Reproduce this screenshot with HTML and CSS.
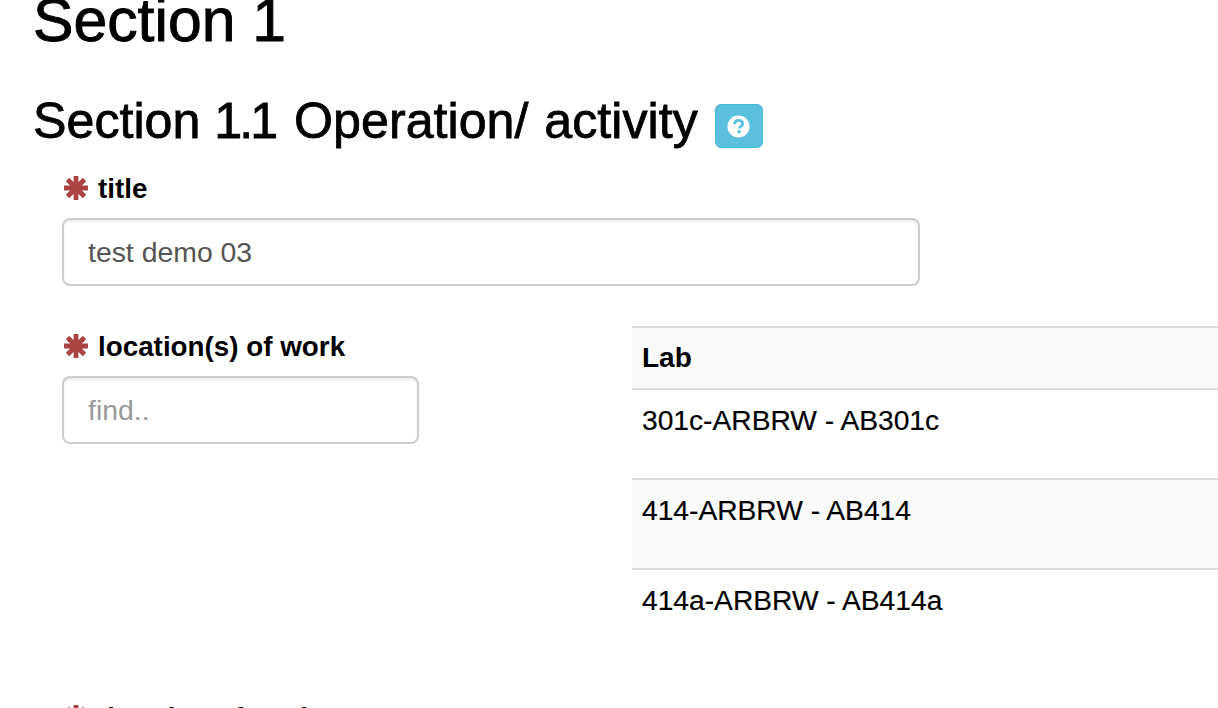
FILE: index.html
```html
<!DOCTYPE html>
<html lang="en">
<head>
<meta charset="utf-8">
<title>Section 1</title>
<link rel="stylesheet" href="styles.css">
</head>
<body>
<main class="page">
  <h1 class="title">Section 1</h1>
  <h2 class="subtitle"><span>Section <span class="num">1.1</span><span class="rest"> Operation/ activity</span></span>
    <span class="help"><svg class="help-icon" viewBox="0 0 24 24"><circle cx="12" cy="12" r="11.500" fill="#fff"/><path d="M7.800 9.600c.2-2.700 1.900-4 4.300-4 2.500 0 4.200 1.400 4.200 3.400 0 1.600-.9 2.400-2 3.100-1 .6-1.200 1-1.200 2.100" fill="none" stroke="#5bc0de" stroke-width="3"/><rect x="11" y="15.800" width="3.200" height="3.200" fill="#5bc0de"/></svg></span>
  </h2>
  <div class="group group-title">
    <label class="label"><svg class="req" viewBox="0 0 24 24"><circle cx="12" cy="12" r="6.500" fill="#a94442"/><path d="M12 0v24M0 12h24M3.500 3.500l17 17M20.500 3.500l-17 17" stroke="#a94442" stroke-width="4.800" fill="none"/></svg>title</label>
    <input class="input" type="text" value="test demo 03">
  </div>
  <div class="columns">
    <div class="group group-find">
      <label class="label"><svg class="req" viewBox="0 0 24 24"><circle cx="12" cy="12" r="6.500" fill="#a94442"/><path d="M12 0v24M0 12h24M3.500 3.500l17 17M20.500 3.500l-17 17" stroke="#a94442" stroke-width="4.800" fill="none"/></svg>location(s) of work</label>
      <input class="input" type="text" placeholder="find..">
    </div>
    <table class="table">
      <thead><tr><th>Lab</th></tr></thead>
      <tbody>
        <tr><td>301c-ARBRW - AB301c</td></tr>
        <tr class="odd"><td>414-ARBRW - AB414</td></tr>
        <tr><td>414a-ARBRW - AB414a</td></tr>
      </tbody>
    </table>
  </div>
  <div class="group group-last">
    <label class="label"><svg class="req" viewBox="0 0 24 24"><circle cx="12" cy="12" r="6.500" fill="#a94442"/><path d="M12 0v24M0 12h24M3.500 3.500l17 17M20.500 3.500l-17 17" stroke="#a94442" stroke-width="4.800" fill="none"/></svg>duration of work</label>
  </div>
</main>
</body>
</html>
```
FILE: styles.css
```css
* { box-sizing: border-box; }
html, body { margin: 0; height: 708px; overflow: hidden; background: #fff; }
body { font-family: "Liberation Sans", Arial, sans-serif; color: #000; font-size: 28.2px; }
.page { padding: 0 0 0 33px; margin-top: -13px; }
.title { margin: 0; font-size: 60.700px; line-height: 66px; font-weight: 400; -webkit-text-stroke: .9px #000; }
.subtitle { margin: 37px 0 0; font-size: 50.200px; line-height: 62px; font-weight: 400; display: flex; align-items: center; gap: 17px; white-space: nowrap; -webkit-text-stroke: .8px #000; }
.num { letter-spacing: -3px; margin-right: 3px; }
.rest { word-spacing: 2px; }
.help { width: 48px; height: 44px; border: 1px solid #46b8da; border-radius: 6px; background: #5bc0de; display: flex; align-items: center; justify-content: center; margin-top: 10px; }
.help-icon { width: 23px; height: 23px; }
.group { padding-left: 29px; }
.group-title { margin-top: 17px; }
.label { display: flex; align-items: center; font-size: 27.800px; font-weight: 700; line-height: 40px; height: 40px; white-space: nowrap; }
.req { width: 24px; height: 24px; margin: -3px 10px 0 2px; flex: none; }
.input { display: block; height: 68px; border: 2px solid #ccc; border-radius: 8px; padding: 0 24px; font: 28.400px "Liberation Sans", Arial, sans-serif; color: #555; outline: 0; background: #fff; box-shadow: inset 0 2px 2px rgba(0,0,0,.075); }
.input::placeholder { color: #999; opacity: 1; }
.group-title .input { width: 858px; margin-top: 9px; }
.group-find .input { width: 357px; margin-top: 9px; }
.columns { display: flex; margin-top: 40px; align-items: flex-start; }
.group-find { width: 599px; flex: none; padding-top: 1px; }
.table { flex: 1; width: 586px; border-collapse: collapse; border-top: 2px solid #ddd; }
.table th { text-align: left; height: 62px; padding: 0 10px; background: #f9f9f9; border-bottom: 2px solid #ddd; font-weight: 700; font-size: 28px; }
.table td { height: 90px; padding: 14px 10px 0; vertical-align: top; border-bottom: 2px solid #ddd; line-height: 32px; -webkit-text-stroke: .2px #000; }
.table tr:last-child td { border-bottom: 0; }
.odd td { background: #f9f9f9; }
.group-last { margin-top: 39px; }
```
